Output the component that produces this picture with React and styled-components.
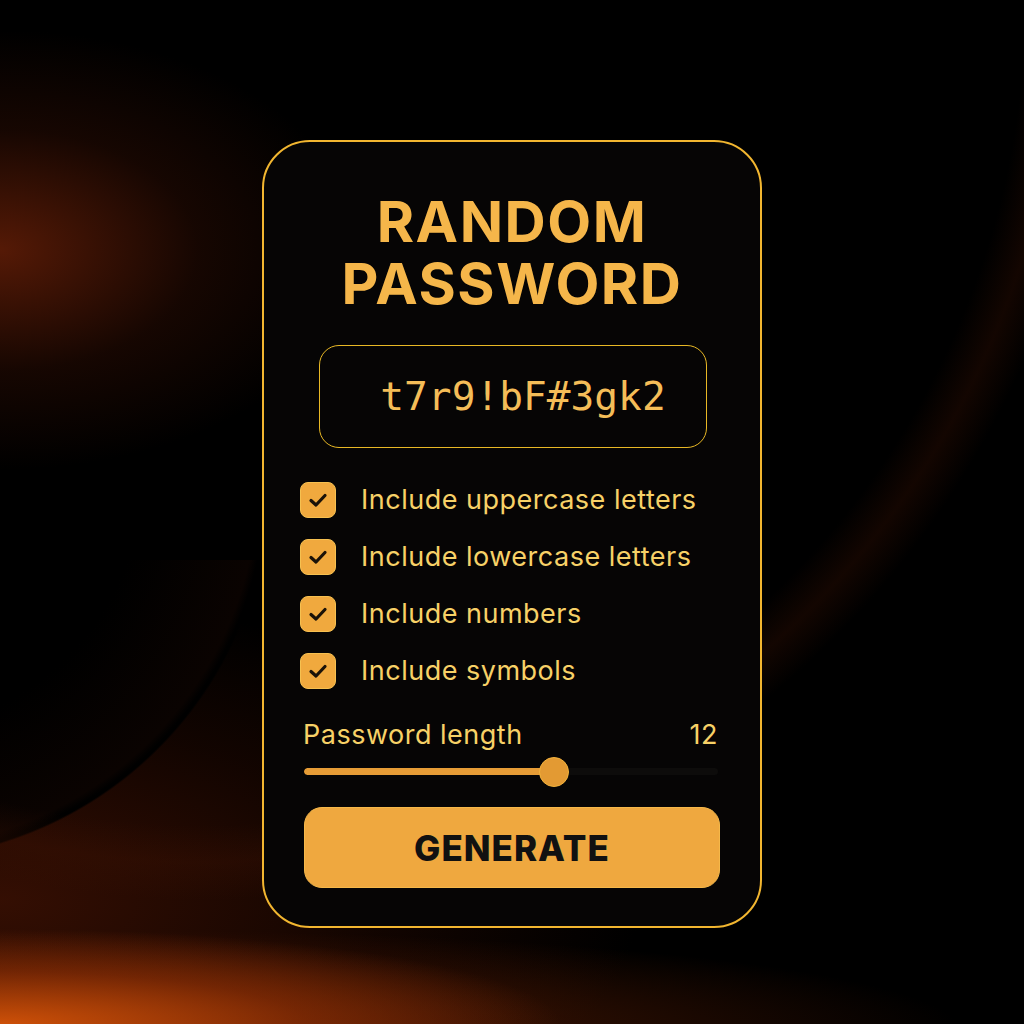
import React, { useState } from 'react';
import styled, { createGlobalStyle } from 'styled-components';

const GlobalStyle = createGlobalStyle`
  html, body {
    margin: 0;
    padding: 0;
    background: #000;
  }
  * {
    box-sizing: border-box;
  }
`;

const Page = styled.div`
  width: 100%;
  min-height: 1024px;
  display: flex;
  justify-content: center;
  align-items: flex-start;
  padding-top: 140px;
  font-family: Inter, 'Noto Sans', sans-serif;
  background-color: #000;
  background-image:
    radial-gradient(circle 900px at 200px 0px, transparent 825px, rgba(60, 18, 3, 0.32) 862px, transparent 900px),
    radial-gradient(circle 380px at -110px -80px, #000 0px, #000 250px, #0a0301 368px, #000 376px, #000 378.5px, transparent 380.5px),
    radial-gradient(ellipse 360px 220px at 0px 250px, rgba(100, 30, 7, 0.85), rgba(55, 16, 4, 0.4) 55%, transparent 100%),
    radial-gradient(ellipse 560px 95px at 0px 1024px, rgba(205, 80, 8, 1), rgba(150, 50, 5, 0.6) 55%, transparent 100%),
    radial-gradient(ellipse 900px 110px at 150px 1030px, rgba(110, 35, 4, 0.75), transparent 90%),
    radial-gradient(ellipse 640px 300px at 0px 900px, rgba(58, 16, 3, 0.9), rgba(32, 8, 1, 0.55) 60%, transparent 100%);
  background-position: 0 0, 0 560px, 0 0, 0 0, 0 0, 0 0;
  background-size: 100% 100%, 420px 400px, 100% 100%, 100% 100%, 100% 100%, 100% 100%;
  background-repeat: no-repeat;
`;

const Card = styled.div`
  width: 500px;
  height: 788px;
  border: 2px solid #f2b630;
  border-radius: 48px;
  background: #060505;
  padding: 49px 40px 38px;
  display: flex;
  flex-direction: column;
`;

const Title = styled.h1`
  margin: 0;
  text-align: center;
  font-size: 57px;
  font-weight: 700;
  letter-spacing: 1.5px;
  color: #f5b64a;
`;

const TitleLine = styled.span`
  display: block;
  height: 62px;
  line-height: 62px;
`;

const PasswordBox = styled.div`
  margin: 30px 13px 0 15px;
  height: 103px;
  border: 1.5px solid #e8b825;
  border-radius: 20px;
  display: flex;
  align-items: center;
  justify-content: center;
  padding-left: 20px;
  font-family: 'DejaVu Sans Mono', 'Liberation Mono', monospace;
  font-size: 39.5px;
  color: #f4bd58;
`;

const Options = styled.div`
  margin-top: 34px;
  display: flex;
  flex-direction: column;
  gap: 21px;
`;

const Option = styled.label`
  display: flex;
  align-items: center;
  gap: 25px;
  height: 36px;
  margin-left: -4px;
  font-size: 27px;
  letter-spacing: 0.5px;
  color: #f7d167;
  cursor: pointer;
`;

const Box = styled.span`
  width: 36px;
  height: 36px;
  flex: none;
  border-radius: 8px;
  border: 1.5px solid #f6c050;
  background: ${p => (p.checked ? '#f0a93e' : 'transparent')};
  display: flex;
  align-items: center;
  justify-content: center;
`;

const LengthRow = styled.div`
  margin-top: 31px;
  display: flex;
  justify-content: space-between;
  align-items: center;
  height: 30px;
  margin-left: -1px;
  margin-right: 2px;
  font-size: 27px;
  letter-spacing: 0.5px;
  color: #f7d167;
`;

const Slider = styled.div`
  position: relative;
  margin: 7px 2px 0 0;
  height: 30px;
  display: flex;
  align-items: center;
`;

const Track = styled.div`
  width: 100%;
  height: 7px;
  border-radius: 4px;
  background: #0d0c0b;
  overflow: hidden;
`;

const Fill = styled.div`
  height: 100%;
  background: #e69c36;
  border-radius: 4px;
`;

const Thumb = styled.div`
  position: absolute;
  top: 0;
  width: 30px;
  height: 30px;
  margin-left: -15px;
  border-radius: 50%;
  background: #e39a33;
  border: 1.5px solid #f2b23c;
`;

const Button = styled.button`
  margin-top: 21px;
  height: 81px;
  border: 1.5px solid #f5b84a;
  border-radius: 18px;
  background: #efa83f;
  font-family: Inter, 'Noto Sans', sans-serif;
  font-size: 35px;
  font-weight: 800;
  letter-spacing: 1px;
  color: #111;
  cursor: pointer;
`;

const CheckIcon = () => (
  <svg width="22" height="22" viewBox="0 0 22 22">
    <path
      d="M4 11.5 L9 16 L18 6.5"
      fill="none"
      stroke="#1a1208"
      strokeWidth="3.2"
      strokeLinecap="round"
      strokeLinejoin="round"
    />
  </svg>
);

const optionLabels = [
  'Include uppercase letters',
  'Include lowercase letters',
  'Include numbers',
  'Include symbols',
];

const App = () => {
  const [checked, setChecked] = useState([true, true, true, true]);
  const length = 12;
  const pct = 60.5;

  const toggle = i => setChecked(c => c.map((v, j) => (j === i ? !v : v)));

  return (
    <>
      <GlobalStyle />
      <Page>
        <Card>
          <Title>
            <TitleLine>RANDOM</TitleLine>
            <TitleLine>PASSWORD</TitleLine>
          </Title>
          <PasswordBox>t7r9!bF#3gk2</PasswordBox>
          <Options>
            {optionLabels.map((label, i) => (
              <Option key={label} onClick={() => toggle(i)}>
                <Box checked={checked[i]}>{checked[i] && <CheckIcon />}</Box>
                {label}
              </Option>
            ))}
          </Options>
          <LengthRow>
            <span>Password length</span>
            <span>{length}</span>
          </LengthRow>
          <Slider>
            <Track>
              <Fill style={{ width: `${pct}%` }} />
            </Track>
            <Thumb style={{ left: `${pct}%` }} />
          </Slider>
          <Button>GENERATE</Button>
        </Card>
      </Page>
    </>
  );
};

export default App;
